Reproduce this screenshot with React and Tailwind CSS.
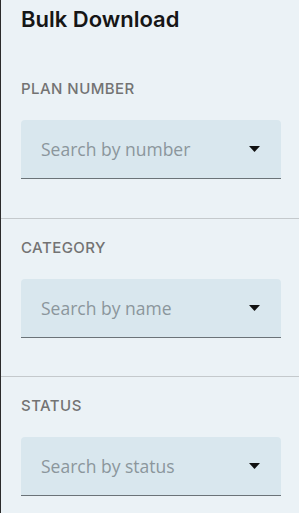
function Field({ label, placeholder }) {
  return (
    <div className="pl-[20px] pr-[18px]">
      <div className="text-[15px] font-medium uppercase tracking-[0.03em] text-[#737373] leading-[18px]">
        {label}
      </div>
      <div className="mt-[22px] h-[59px] rounded-t-[4px] bg-[#d9e7ee] border-b border-[#6b7378] flex items-center pl-[20px] pr-[21px]">
        <span className="flex-1 text-[17.5px] text-[#8b969c] font-['Open_Sans',sans-serif]">
          {placeholder}
        </span>
        <svg width="11" height="6" viewBox="0 0 11 6" className="text-[#111]">
          <path d="M0 0h11L5.5 6z" fill="currentColor" />
        </svg>
      </div>
    </div>
  );
}

export default function App() {
  return (
    <div className="w-[299px] h-[513px] bg-[#ebf2f6] border-l border-[#2b2b2b] font-['Inter',sans-serif] overflow-hidden">
      <div className="pt-[5px] pl-[20px]">
        <h1 className="text-[22px] font-semibold text-[#161616] leading-[28px]">Bulk Download</h1>
      </div>
      <div className="pt-[47px] pb-[39px]">
        <Field label="Plan Number" placeholder="Search by number" />
      </div>
      <div className="border-t border-[#c4c9cc] pt-[20px] pb-[38px]">
        <Field label="Category" placeholder="Search by name" />
      </div>
      <div className="border-t border-[#c4c9cc] pt-[20px] pb-[38px]">
        <Field label="Status" placeholder="Search by status" />
      </div>
    </div>
  );
}
